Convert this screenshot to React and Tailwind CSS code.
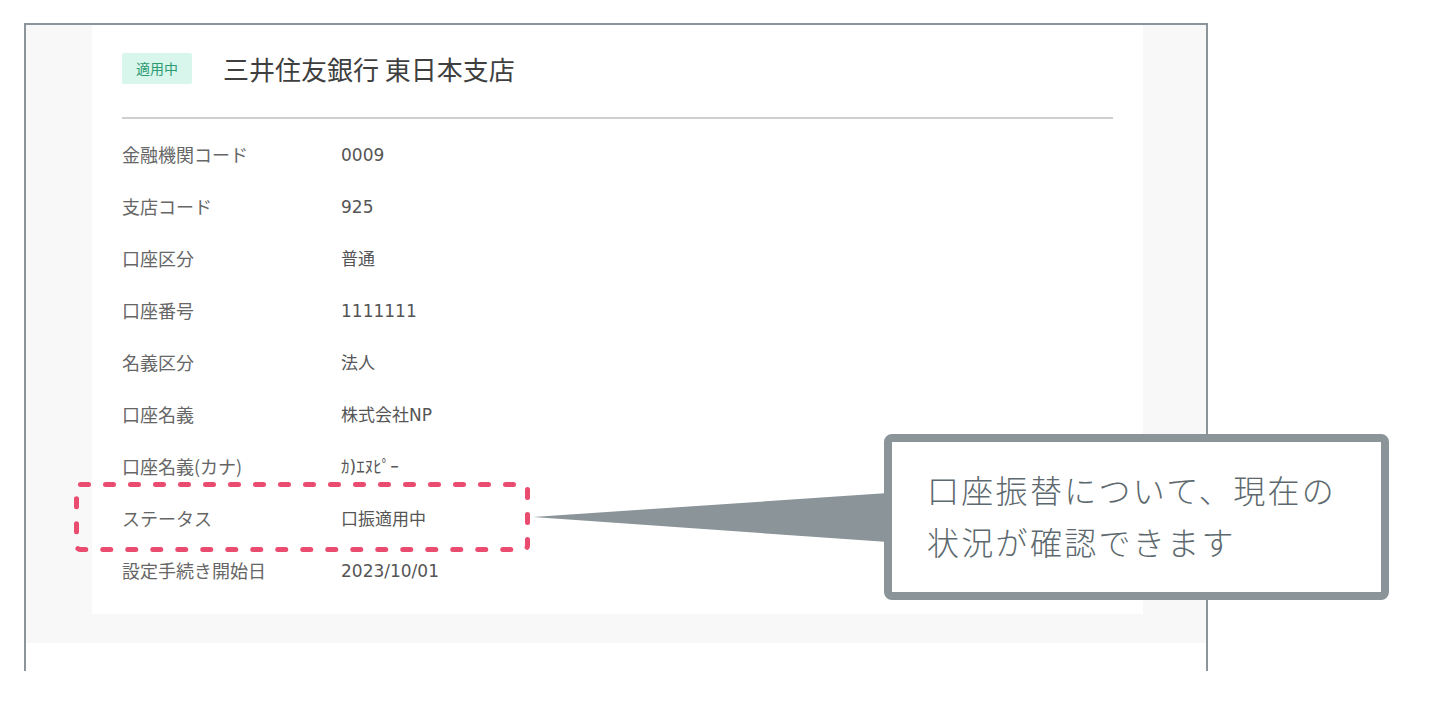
const rows = [
  ['金融機関コード', '0009'],
  ['支店コード', '925'],
  ['口座区分', '普通'],
  ['口座番号', '1111111'],
  ['名義区分', '法人'],
  ['口座名義', '株式会社NP'],
  ['口座名義(カナ)', 'ｶ)ｴﾇﾋﾟｰ'],
  ['ステータス', '口振適用中'],
  ['設定手続き開始日', '2023/10/01'],
];

const font = { fontFamily: '"Noto Sans CJK JP", "Noto Sans", sans-serif' };
const valueFont = { fontFamily: '"DejaVu Sans", "Noto Sans CJK JP", sans-serif' };

function BankCard() {
  return (
    <div className="w-[1051px] bg-white pl-[30px] pr-[30px] pt-[28px] pb-[18px]">
      <div className="flex h-[31px] items-center">
        <span className="flex h-[31px] w-[70px] items-center justify-center rounded-[2px] bg-[#d8f6ec] text-[14px] text-[#2d9b72]">
          適用中
        </span>
        <span className="ml-[31px] text-[26px] text-[#3f3f3f]">三井住友銀行 東日本支店</span>
      </div>
      <div className="mt-[33px] h-[2px] bg-[#cfcfcf]" />
      <div className="mt-[9px] flex flex-col">
        {rows.map(([label, value]) => (
          <div key={label} className="flex h-[52px] items-center">
            <span className="w-[219px] text-[18px] text-[#666]">{label}</span>
            <span className="mt-[4px] text-[17px] text-[#555]" style={valueFont}>
              {value}
            </span>
          </div>
        ))}
      </div>
    </div>
  );
}

export default function App() {
  return (
    <div className="relative h-[716px] w-[1450px] overflow-hidden bg-white" style={font}>
      <div className="pl-[24px] pt-[23px]">
        <div className="h-[648px] w-[1184px] border-x-2 border-t-2 border-[#8c969a]">
          <div className="h-[618px] bg-[#f8f8f8] pl-[66px]">
            <BankCard />
          </div>
        </div>
      </div>

      <svg className="absolute left-[74px] top-[482px]" width="456" height="70" viewBox="0 0 456 70">
        <rect
          x="2.5"
          y="2.5"
          width="451"
          height="65"
          rx="4"
          fill="none"
          stroke="#ea4c6f"
          strokeWidth="5"
          strokeDasharray="8 17"
          strokeLinecap="round"
        />
      </svg>

      <svg className="absolute left-[530px] top-[488px]" width="360" height="60" viewBox="0 0 360 60">
        <polygon points="3,29 358,5 358,54" fill="#8b9599" />
      </svg>

      <div className="absolute left-[884px] top-[434px] h-[166px] w-[505px] rounded-[8px] border-[8px] border-[#8b9599] bg-white pl-[35px] pt-[21px]">
        <p className="text-[32px] font-light leading-[52px] tracking-[2.3px] text-[#5d696e]">
          口座振替について、現在の
          <br />
          状況が確認できます
        </p>
      </div>
    </div>
  );
}
